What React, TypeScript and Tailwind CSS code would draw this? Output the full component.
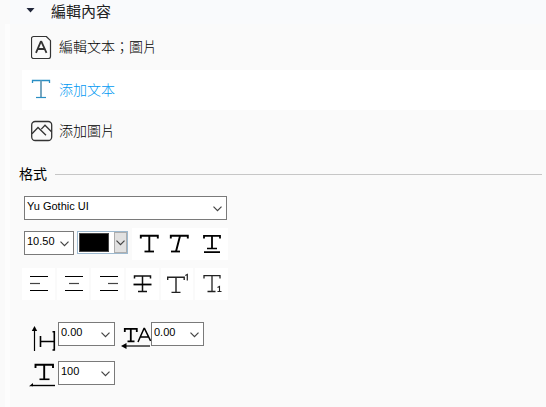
import React, { useState } from 'react';

interface IconProps {
  className?: string;
}

interface FieldSelectProps {
  label: string;
  options: string[];
  className: string;
}

const FieldSelect: React.FC<FieldSelectProps> = ({ label, options, className }) => {
  const [value, setValue] = useState(options[0]);

  return (
    <div className={`grid h-6 shrink-0 border border-[#7a7a7a] bg-white ${className}`}>
      <select
        aria-label={label}
        value={value}
        onChange={(e) => setValue(e.target.value)}
        className="col-start-1 row-start-1 h-full w-full min-w-0 appearance-none bg-transparent pb-1 pl-0.5 text-[11px] leading-4 text-black outline-none"
      >
        {options.map(o => <option key={o} value={o}>{o}</option>)}
      </select>
      <Chevron className="pointer-events-none col-start-1 row-start-1 mt-px mr-1 self-center justify-self-end" />
    </div>
  );
};

const Chevron: React.FC<IconProps> = ({ className }) => (
  <svg width="9" height="6" viewBox="0 0 9 6" fill="none" stroke="#444" strokeWidth="1.2" className={className}>
    <path d="M.5 .7 4.5 4.7 8.5 .7" />
  </svg>
);

const EditTextIcon = () => (
  <svg width="22" height="24" viewBox="0 0 22 24" fill="none" stroke="#333" strokeWidth="1.2" strokeLinejoin="round">
    <path d="M2.5 1.5h12.8L19.5 5.7v15.8a2 2 0 0 1-2 2H2.5a2 2 0 0 1-2-2V3.5a2 2 0 0 1 2-2Z" />
    <path d="M5 17.8 9.8 6.7h.6L15.5 17.8M6.8 14h7" strokeWidth="1.8" />
  </svg>
);

const AddTextIcon = () => (
  <svg width="22" height="24" viewBox="0 0 22 24" fill="none" stroke="#2a8fc4">
    <path d="M1.5 5V2.5h17V5" strokeWidth="1.3" />
    <path d="M10 2.5v17.5" strokeWidth="1.8" stroke="#6a9db8" />
    <path d="M5 19.5h10" strokeWidth="1.2" />
  </svg>
);

const AddImageIcon = () => (
  <svg width="22" height="24" viewBox="0 0 22 24" fill="none" stroke="#333" strokeWidth="1.3">
    <rect x=".7" y="2.5" width="20" height="19" rx="3.5" />
    <path d="M1 14.7 7 8.5l8 7.8M10.3 10.1l3.7-3.9 6.5 6.5" />
  </svg>
);

const BoldIcon = () => (
  <svg width="32" height="32" viewBox="0 0 32 32" fill="none" stroke="#000">
    <path d="M8.8 10.5V7.8h17v2.7M17.3 8v15.5" strokeWidth="1.9" />
    <path d="M12.5 23.5h9.5" strokeWidth="1.8" />
  </svg>
);

const ItalicIcon = () => (
  <svg width="32" height="32" viewBox="0 0 32 32" fill="none" stroke="#000">
    <path d="M6.8 10.5V7.8h17v2.7M16 8l-4 15.5" strokeWidth="1.9" />
    <path d="M7 23.5h9" strokeWidth="1.8" />
  </svg>
);

const UnderlineIcon = () => (
  <svg width="32" height="32" viewBox="0 0 32 32" fill="none" stroke="#000">
    <path d="M8 10.5V7.8h16v2.7M16 8v12.5" strokeWidth="1.8" />
    <path d="M11 20.5h10M8 24.2h16" strokeWidth="1.7" />
  </svg>
);

const AlignLeftIcon = () => (
  <svg width="32" height="32" viewBox="0 0 32 32" fill="none" stroke="#000">
    <path d="M8 8.5h18M8 22.5h18" strokeWidth="1.1" />
    <path d="M8 15.5h10" stroke="#444" strokeWidth="1.2" />
  </svg>
);

const AlignCenterIcon = () => (
  <svg width="32" height="32" viewBox="0 0 32 32" fill="none" stroke="#000">
    <path d="M8 8.5h18M8 22.5h18" strokeWidth="1.1" />
    <path d="M12 15.5h10" stroke="#444" strokeWidth="1.2" />
  </svg>
);

const AlignRightIcon = () => (
  <svg width="32" height="32" viewBox="0 0 32 32" fill="none" stroke="#000">
    <path d="M8 8.5h18M8 22.5h18" strokeWidth="1.1" />
    <path d="M16 15.5h10" stroke="#444" strokeWidth="1.2" />
  </svg>
);

const StrikeIcon = () => (
  <svg width="32" height="32" viewBox="0 0 32 32" fill="none" stroke="#111">
    <path d="M8.5 10.5V8h16v2.5M16.5 8v15.5M12 23.5h9" strokeWidth="1.5" />
    <path d="M7.5 16.5h18" stroke="#000" strokeWidth="1.8" />
  </svg>
);

const SuperscriptIcon = () => (
  <svg width="32" height="32" viewBox="0 0 32 32" fill="none" stroke="#222" strokeWidth="1.4">
    <path d="M6.7 12V9.2h16.5V12M15 9.5v15M10.5 24.4h9" />
    <path d="M24.3 7.5l2-1v6" strokeWidth="1.2" />
  </svg>
);

const SubscriptIcon = () => (
  <svg width="32" height="32" viewBox="0 0 32 32" fill="none" stroke="#222" strokeWidth="1.3">
    <path d="M8 10.5V7.7h16v2.8M16 8v15.5M11.5 23.5h8" />
    <path d="M21.5 19.5l2-1v5M21.5 23.5h4" strokeWidth="1.1" />
  </svg>
);

const LineSpacingIcon = () => (
  <svg width="30" height="26" viewBox="0 0 30 26" fill="none" stroke="#000">
    <path d="M6.5 5v20" strokeWidth="1.2" />
    <path d="M6.5 0 9.2 5H3.8Z" fill="#000" stroke="none" />
    <path d="M12.5 10v11M12.5 15.5H26M24.5 5.8H26.3V24H24.5" strokeWidth="1.6" />
  </svg>
);

const CharSpacingIcon = () => (
  <svg width="30" height="26" viewBox="0 0 30 26" fill="none" stroke="#000">
    <path d="M3.8 8V4.8h12V8M9.8 5v12M6.5 17.3h7" strokeWidth="1.8" />
    <path d="M17 18 23 4.5h.5L29.6 17M18.8 13h8.7" strokeWidth="1.5" />
    <path d="M5 22H29" stroke="#555" strokeWidth="1.8" />
    <path d="M0 22 5.5 19v6Z" fill="#000" stroke="none" />
  </svg>
);

const ScaleIcon = () => (
  <svg width="30" height="26" viewBox="0 0 30 26" fill="none" stroke="#000">
    <path d="M7.5 7V3.7h17.5V7M16.2 4v14" strokeWidth="1.9" />
    <path d="M11.5 18.3h10" strokeWidth="1.6" />
    <path d="M4 24.5H27" strokeWidth="1.4" />
    <path d="M1 25.2 5 22v3.2Z" fill="#000" stroke="none" />
  </svg>
);

const menuItems = [
  { id: 'edit', label: '編輯文本；圖片', icon: <EditTextIcon />, height: 'h-[46px]' },
  { id: 'text', label: '添加文本', icon: <AddTextIcon />, height: 'h-10' },
  { id: 'image', label: '添加圖片', icon: <AddImageIcon />, height: 'h-[42px]' },
];

const styleButtons = [
  { label: '粗體', icon: <BoldIcon /> },
  { label: '斜體', icon: <ItalicIcon /> },
  { label: '底線', icon: <UnderlineIcon /> },
];

const paragraphButtons = [
  { label: '靠左對齊', icon: <AlignLeftIcon /> },
  { label: '置中對齊', icon: <AlignCenterIcon /> },
  { label: '靠右對齊', icon: <AlignRightIcon /> },
  { label: '刪除線', icon: <StrikeIcon /> },
  { label: '上標', icon: <SuperscriptIcon /> },
  { label: '下標', icon: <SubscriptIcon /> },
];

export default function App() {
  const [active, setActive] = useState('text');

  return (
    <div className="flex min-h-screen bg-[#fafafa] font-['Liberation_Sans','Noto_Sans_CJK_TC',sans-serif] text-[#222]">
      <div className="mt-6 ml-[5px] w-[5px] shrink-0 bg-[#fdfdfd]" />

      <main className="min-w-0 flex-1">
        <button className="flex h-6 w-full items-center gap-4 bg-[#f9fafc] pl-4 text-left text-[15px] leading-6">
          <svg width="9" height="6" viewBox="0 0 9 6" className="mb-1"><path d="M.5 1h8l-4 4.5Z" fill="#20263a" /></svg>
          編輯內容
        </button>

        <nav className="pl-3">
          {menuItems.map(item => (
            <button
              key={item.id}
              onClick={() => setActive(item.id)}
              className={`flex w-full items-center gap-1.5 pl-[9px] text-left text-sm font-light ${item.height} ${active === item.id ? 'bg-white text-[#0099f2]' : 'text-black'}`}
            >
              {item.icon}
              {item.label}
            </button>
          ))}
        </nav>

        <section aria-labelledby="format-title">
          <div className="flex h-11 items-center gap-2 pr-1 pl-[9px]">
            <h2 id="format-title" className="text-sm font-normal text-black">格式</h2>
            <div className="h-px flex-1 bg-[#c6c6c6]" />
          </div>

          <div className="flex pl-3.5">
            <FieldSelect label="字型" options={['Yu Gothic UI', 'Arial', 'Times New Roman']} className="w-[203px]" />
          </div>

          <div className="mt-2 flex pl-3.5">
            <div className="flex gap-[3px] pt-[3px]">
              <FieldSelect label="字型大小" options={['10.50', '12.00', '14.00']} className="w-[50px]" />
              <button aria-label="文字色彩" className="flex h-[23px] w-[51px] justify-between border border-[#9db9cf] bg-white">
                <span className="m-px h-[19px] w-[30px] border border-[#444] bg-black" />
                <span className="flex h-full w-[13px] items-center justify-center border border-[#adadad] bg-[#e1e1e1]"><Chevron className="shrink-0" /></span>
              </button>
            </div>
            <div className="ml-1 flex bg-white">
              {styleButtons.map(b => (
                <button key={b.label} aria-label={b.label} className="size-8">{b.icon}</button>
              ))}
            </div>
          </div>

          <div className="mt-2 ml-3 grid w-[206px] grid-cols-6 gap-0.5">
            {paragraphButtons.map(b => (
              <button key={b.label} aria-label={b.label} className="flex h-8 justify-center overflow-hidden bg-white">{b.icon}</button>
            ))}
          </div>

          <div className="mt-[22px] flex pl-[18px]">
            <div className="flex">
              <span className="h-[30px] pt-1"><LineSpacingIcon /></span>
              <FieldSelect label="行距" options={['0.00', '1.00', '2.00']} className="w-[57px]" />
            </div>
            <div className="ml-1.5 flex">
              <span className="h-[30px] pt-0.5"><CharSpacingIcon /></span>
              <FieldSelect label="字元間距" options={['0.00', '1.00', '2.00']} className="w-[53px]" />
            </div>
          </div>

          <div className="mt-[9px] flex pl-[18px]">
            <ScaleIcon />
            <FieldSelect label="水平縮放" options={['100', '90', '80']} className="w-[57px]" />
          </div>
        </section>
      </main>
    </div>
  );
}
